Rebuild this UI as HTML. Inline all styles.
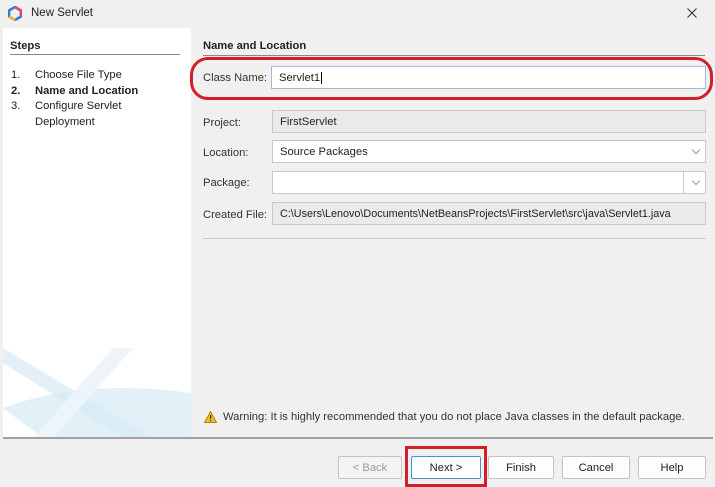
<!DOCTYPE html>
<html><head><style>
*{margin:0;padding:0;box-sizing:border-box}
body{width:715px;height:487px;background:#f0f0f0;font-family:"Liberation Sans",sans-serif;font-size:11.2px;color:#222;position:relative;overflow:hidden}
.a{position:absolute}
.f{position:absolute;border:1px solid #c8c8c8;height:23px;line-height:22px;padding-left:7px;left:272px;width:434px}
.btn{position:absolute;top:456px;height:23px;border:1px solid #c4c4c4;background:#fdfdfd;border-radius:2px;text-align:center;line-height:22px}
.lbl{position:absolute;left:203px;color:#333}
.dd{position:absolute;right:6px;top:6px;width:6px;height:6px;border-right:1px solid #999;border-bottom:1px solid #999;transform:rotate(45deg)}
</style></head><body>
<svg class="a" style="left:8px;top:6px" width="14" height="15" viewBox="0 0 14 15"><polygon points="7,1 13,4.5 13,10.5 7,14 1,10.5 1,4.5" fill="none" stroke="#2c7fd0" stroke-width="2.6"/><path d="M7,1 L13,4.5 L13,10.5" fill="none" stroke="#e04a6a" stroke-width="2.6"/><path d="M1,10.5 L7,14" stroke="#f2b233" stroke-width="2.6"/></svg>
<div class="a" style="left:31px;top:7px;font-size:11.5px">New Servlet</div>
<svg class="a" style="left:687px;top:8px" width="10" height="10"><path d="M0.5,0.5 L9.5,9.5 M9.5,0.5 L0.5,9.5" stroke="#333" stroke-width="1.1"/></svg>
<div class="a" style="left:3px;top:28px;width:188px;height:410px;background:#fff;overflow:hidden">
<svg class="a" style="left:0;top:320px" width="188" height="90"><path d="M0,15 L120,90 L150,90 L0,0Z" fill="#e4f0f7"/><path d="M0,60 Q80,30 188,45 L188,90 L40,90Z" fill="#d6e9f4" opacity=".7"/><path d="M110,0 L30,90 L50,90 L130,0Z" fill="#eef5fa"/></svg>
</div>
<div class="a" style="left:10px;top:40px;font-weight:bold">Steps</div>
<div class="a" style="left:10px;top:54px;width:170px;border-top:1px solid #888"></div>
<div class="a" style="left:11px;top:68px;line-height:15.5px">1.<br><b>2.</b><br>3.</div>
<div class="a" style="left:35px;top:68px;line-height:15.5px">Choose File Type<br><b>Name and Location</b><br>Configure Servlet<br>Deployment</div>
<div class="a" style="left:203px;top:40px;font-weight:bold">Name and Location</div>
<div class="a" style="left:203px;top:55px;width:502px;border-top:1px solid #888"></div>
<div class="a" style="left:190px;top:57px;width:523px;height:43px;border:3px solid #d0202a;border-radius:18px"></div>
<div class="lbl" style="top:72px">Class Name:</div>
<div class="f" style="left:271px;width:435px;top:66px;background:#fff;border-color:#9ebbd8">Servlet1<span style="border-left:1px solid #000;margin-left:1px"></span></div>
<div class="lbl" style="top:117px">Project:</div>
<div class="f" style="top:110px;background:#eaeaea">FirstServlet</div>
<div class="lbl" style="top:147px">Location:</div>
<div class="f" style="top:140px;background:#fff">Source Packages<div class="dd"></div></div>
<div class="lbl" style="top:177px">Package:</div>
<div class="f" style="top:171px;background:#fff"><div class="a" style="left:410px;top:0;height:21px;border-left:1px solid #ccc"></div><div class="dd"></div></div>
<div class="lbl" style="top:209px">Created File:</div>
<div class="f" style="top:202px;background:#eaeaea;font-size:10.8px">C:\Users\Lenovo\Documents\NetBeansProjects\FirstServlet\src\java\Servlet1.java</div>
<div class="a" style="left:203px;top:238px;width:503px;border-top:1px solid #ccc"></div>
<svg class="a" style="left:204px;top:411px" width="13" height="12"><polygon points="6.5,0.5 12.5,11.5 0.5,11.5" fill="#f0c020" stroke="#b08a00"/><rect x="6" y="4" width="1.2" height="4" fill="#333"/><rect x="6" y="9" width="1.2" height="1.2" fill="#333"/></svg>
<div class="a" style="left:223px;top:411px;color:#333">Warning: It is highly recommended that you do not place Java classes in the default package.</div>
<div class="a" style="left:3px;top:437px;width:710px;border-top:2px solid #a0a0a0"></div>
<div class="btn" style="left:338px;width:64px;color:#999;background:#f4f4f4">&lt; Back</div>
<div class="btn" style="left:411px;width:70px;border-color:#4a90d0">Next &gt;</div>
<div class="btn" style="left:488px;width:66px">Finish</div>
<div class="btn" style="left:562px;width:68px">Cancel</div>
<div class="btn" style="left:638px;width:68px">Help</div>
<div class="a" style="left:405px;top:446px;width:82px;height:41px;border:3px solid #d0202a"></div>
</body></html>
